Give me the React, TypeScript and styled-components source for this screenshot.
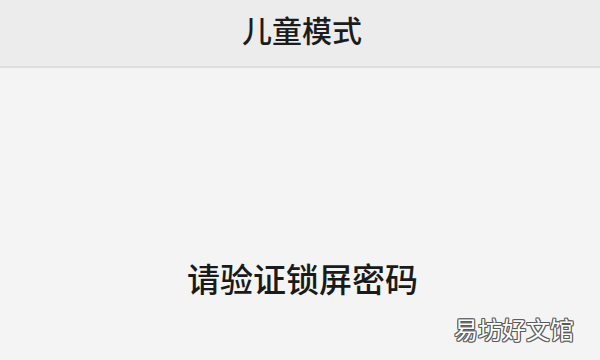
import React from 'react'
import styled, { createGlobalStyle } from 'styled-components'

const GlobalStyle = createGlobalStyle`
  html, body {
    margin: 0;
    padding: 0;
    width: 600px;
    height: 360px;
    overflow: hidden;
    background: #f4f4f4;
    font-family: "Noto Sans CJK SC", "Noto Sans", sans-serif;
  }
`

const Screen = styled.div`
  position: relative;
  width: 600px;
  height: 360px;
  display: flex;
  flex-direction: column;
  background: #f4f4f4;
`

const Header = styled.header`
  height: 68px;
  flex-shrink: 0;
  display: flex;
  justify-content: center;
  align-items: flex-start;
  padding-top: 14px;
  box-sizing: border-box;
  background: #ececec;
  border-bottom: 2px solid #dedede;
`

const Title = styled.h1`
  margin: 0 0 0 4px;
  font-size: 30px;
  line-height: 1;
  font-weight: 500;
  color: #1c1c1c;
`

const Body = styled.main`
  flex: 1;
  display: flex;
  justify-content: center;
  padding-top: 194px;
  box-sizing: border-box;
`

const Prompt = styled.p`
  margin: 0 0 0 5px;
  font-size: 33px;
  line-height: 1;
  font-weight: 500;
  color: #1a1a1a;
`

const Watermark = styled.span`
  position: absolute;
  right: 26px;
  bottom: 19px;
  font-size: 24px;
  line-height: 1;
  color: #ffffff;
  text-shadow:
    1px 0 0 #5a5a5a,
    -1px 0 0 #5a5a5a,
    0 1px 0 #5a5a5a,
    0 -1px 0 #5a5a5a,
    1px 1px 0 #6a6a6a,
    -1px -1px 0 #6a6a6a,
    1px -1px 0 #6a6a6a,
    -1px 1px 0 #6a6a6a;
`

export default function App() {
  return (
    <>
      <GlobalStyle />
      <Screen>
        <Header>
          <Title>儿童模式</Title>
        </Header>
        <Body>
          <Prompt>请验证锁屏密码</Prompt>
        </Body>
        <Watermark>易坊好文馆</Watermark>
      </Screen>
    </>
  )
}
